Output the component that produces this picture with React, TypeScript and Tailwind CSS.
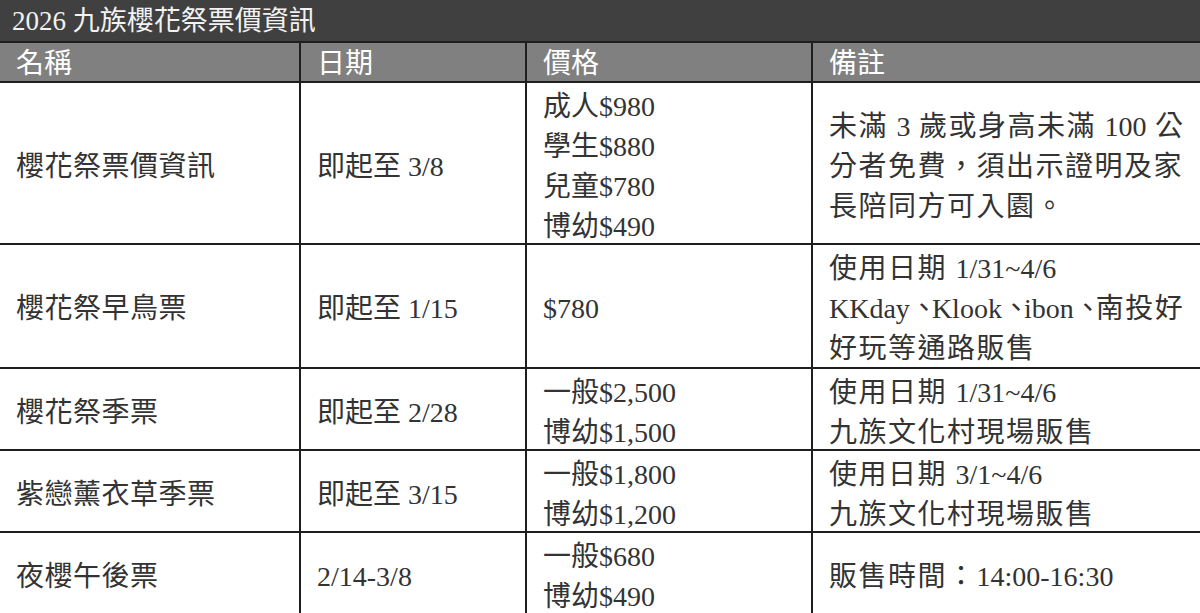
import React from 'react';

interface Row {
  name: string;
  date: string;
  prices: string[];
  notes: string[];
  height: string;
}

const rows: Row[] = [
  {
    name: '櫻花祭票價資訊',
    date: '即起至 3/8',
    prices: ['成人$980', '學生$880', '兒童$780', '博幼$490'],
    notes: ['未滿 3 歲或身高未滿 100 公', '分者免費，須出示證明及家', '長陪同方可入園。'],
    height: 'h-[162px]',
  },
  {
    name: '櫻花祭早鳥票',
    date: '即起至 1/15',
    prices: ['$780'],
    notes: ['使用日期 1/31~4/6', 'KKday、Klook、ibon、南投好', '好玩等通路販售'],
    height: 'h-[124px]',
  },
  {
    name: '櫻花祭季票',
    date: '即起至 2/28',
    prices: ['一般$2,500', '博幼$1,500'],
    notes: ['使用日期 1/31~4/6', '九族文化村現場販售'],
    height: 'h-[82px]',
  },
  {
    name: '紫戀薰衣草季票',
    date: '即起至 3/15',
    prices: ['一般$1,800', '博幼$1,200'],
    notes: ['使用日期 3/1~4/6', '九族文化村現場販售'],
    height: 'h-[82px]',
  },
  {
    name: '夜櫻午後票',
    date: '2/14-3/8',
    prices: ['一般$680', '博幼$490'],
    notes: ['販售時間：14:00-16:30'],
    height: 'h-[82px]',
  },
];

const latin = /^[A-Za-z0-9$,.:~/\-]+$/;

// latin runs keep normal spacing, the CJK comma is drawn narrow like the source font
function Mixed({ text }: { text: string }) {
  const parts = text.split(/([A-Za-z0-9$,.:~/\-]+|、)/).filter(Boolean);
  return (
    <>
      {parts.map((p, i) =>
        latin.test(p) ? (
          <span key={i} className="tracking-normal">{p}</span>
        ) : p === '、' ? (
          <span key={i} className="tracking-[-6px]">、</span>
        ) : (
          <React.Fragment key={i}>{p}</React.Fragment>
        )
      )}
    </>
  );
}

const cols = 'grid grid-cols-[301px_226px_286px_1fr]';
const line = 'border-[#1e1e1e]';

export default function App() {
  return (
    <div className="w-[1200px] h-[613px] overflow-hidden bg-white font-['Liberation_Serif','Noto_Sans_CJK_TC',serif]">
      {/* title bar */}
      <div className="h-[41px] bg-[#404040] text-[#f2f2f2] text-[27px] flex items-center pl-3 pt-[2px] leading-none">
        2026 九族櫻花祭票價資訊
      </div>

      {/* header */}
      <div className={`${cols} h-[42px] bg-[#808080] text-white text-[28px] border-y-2 ${line}`}>
        <div className={`border-r-2 ${line} pl-4 flex items-center`}>名稱</div>
        <div className={`border-r-2 ${line} pl-4 flex items-center`}>日期</div>
        <div className={`border-r-2 ${line} pl-4 flex items-center`}>價格</div>
        <div className="pl-4 flex items-center">備註</div>
      </div>

      {rows.map((row) => (
        <div key={row.name} className={`${cols} ${row.height} border-b-2 ${line} text-[#333] text-[28px] leading-[40px]`}>
          <div className={`border-r-2 ${line} pl-4 pt-[4px] flex items-center tracking-[0.5px]`}>{row.name}</div>
          <div className={`border-r-2 ${line} pl-4 pt-[4px] flex items-center`}>{row.date}</div>
          <div className={`border-r-2 ${line} pl-4 pt-[4px] flex flex-col justify-center`}>
            {row.prices.map((p) => (
              <div key={p} className="whitespace-nowrap">{p}</div>
            ))}
          </div>
          <div className="pl-4 pt-[4px] flex flex-col justify-center tracking-[1.5px]">
            {row.notes.map((n) => (
              <div key={n} className="whitespace-nowrap"><Mixed text={n} /></div>
            ))}
          </div>
        </div>
      ))}
    </div>
  );
}
